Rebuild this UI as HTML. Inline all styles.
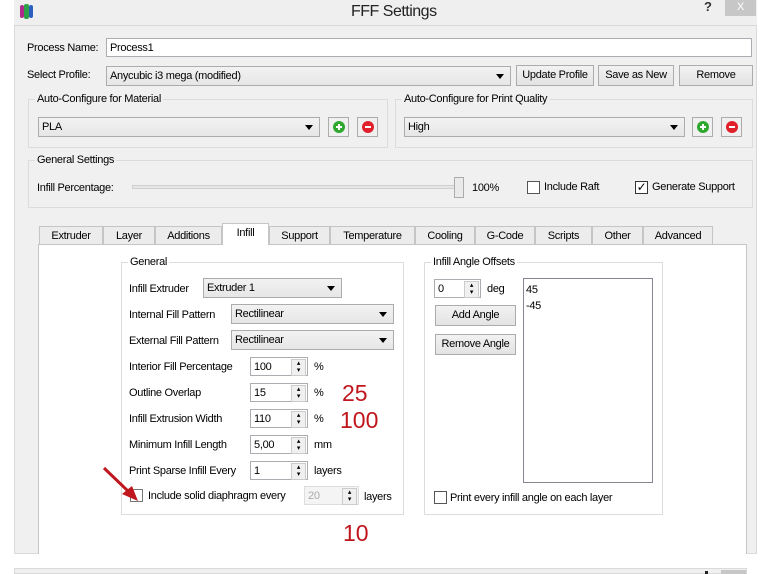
<!DOCTYPE html><html><head><style>
*{box-sizing:border-box;margin:0;padding:0}
body{width:764px;height:574px;background:#fff;position:relative;overflow:hidden;font-family:"Liberation Sans",sans-serif;font-size:11px;color:#000;letter-spacing:-0.3px}
.a{position:absolute;white-space:nowrap}
.in{position:absolute;background:#fff;border:1px solid #abadb3;padding:1px 3px;line-height:16px}
.cb{position:absolute;background:linear-gradient(#f2f2f2,#e6e6e6);border:1px solid #acacac;padding:1px 3px;line-height:17px}
.cb:after{content:"";position:absolute;right:6px;top:7px;border-left:4px solid transparent;border-right:4px solid transparent;border-top:5px solid #000}
.bt{position:absolute;background:linear-gradient(#f2f2f2,#e3e3e3);border:1px solid #acacac;text-align:center;line-height:19px}
.grp{position:absolute;border:1px solid #dcdcdc}
.gl{position:absolute;background:inherit;padding:0 2px;top:-8px;left:6px;line-height:14px}
.ck{position:absolute;width:13px;height:13px;border:1px solid #333;background:#fff}
.sp{position:absolute;background:#fff;border:1px solid #abadb3;padding:1px 3px;line-height:16px;height:19px}
.sp:after{content:"▴\A▾";white-space:pre;position:absolute;right:1px;top:1px;width:13px;height:15px;border:1px solid #ccc;background:#f0f0f0;font-size:7px;line-height:7px;text-align:center;color:#000}
.pl,.mi{position:absolute;width:21px;height:20px;border:1px solid #acacac;background:#f0f0f0}
.pl:after,.mi:after{content:"";position:absolute;left:4px;top:3px;width:12px;height:12px;border-radius:50%}
.pl:after{background:#2fa82f}.mi:after{background:#e0202a}
.pl:before,.mi:before{content:"";position:absolute;left:7px;top:8px;width:6px;height:2px;background:#fff;z-index:2}
.pl i{position:absolute;left:9px;top:6px;width:2px;height:6px;background:#fff;z-index:2}
.tab{position:absolute;top:226px;height:19px;border:1px solid #c5c5c5;border-bottom:none;background:#ececec;text-align:center;line-height:19px}
.red{position:absolute;color:#c0161d;font-size:23px;letter-spacing:0}
</style></head><body>
<div class="a" style="left:14px;top:0;width:743px;height:554px;background:#f0f0f0;border:1px solid #dadada"></div>
<div class="a" style="left:14px;top:0;width:743px;height:26px;background:#efefef;border-bottom:1px solid #d8d8d8"></div>
<div class="a" style="left:20px;top:5px;width:4px;height:13px;background:#b02a8c;border-radius:2px"></div>
<div class="a" style="left:24px;top:4px;width:5px;height:15px;background:#2fa04a;border-radius:2px"></div>
<div class="a" style="left:29px;top:5px;width:4px;height:13px;background:#2a5fc0;border-radius:2px"></div>
<div class="a" style="left:351px;top:3px;font-size:16px;color:#222;letter-spacing:-0.5px">FFF Settings</div>
<div class="a" style="left:704px;top:-1px;font-size:13px;font-weight:bold;color:#333">?</div>
<div class="a" style="left:725px;top:0;width:31px;height:16px;background:#c7c7c7;color:#fff;text-align:center;line-height:15px;font-size:11px">X</div>

<div class="a" style="left:27px;top:42px">Process Name:</div>
<div class="in" style="left:106px;top:38px;width:646px;height:19px">Process1</div>
<div class="a" style="left:27px;top:69px">Select Profile:</div>
<div class="cb" style="left:106px;top:66px;width:405px;height:20px">Anycubic i3 mega (modified)</div>
<div class="bt" style="left:516px;top:65px;width:78px;height:21px">Update Profile</div>
<div class="bt" style="left:598px;top:65px;width:76px;height:21px">Save as New</div>
<div class="bt" style="left:679px;top:65px;width:74px;height:21px">Remove</div>

<div class="grp" style="left:28px;top:99px;width:360px;height:49px;background:#f0f0f0"><span class="gl">Auto-Configure for Material</span></div>
<div class="cb" style="left:38px;top:117px;width:282px;height:20px">PLA</div>
<div class="pl" style="left:328px;top:117px"><i></i></div>
<div class="mi" style="left:357px;top:117px"></div>
<div class="grp" style="left:395px;top:99px;width:358px;height:49px;background:#f0f0f0"><span class="gl">Auto-Configure for Print Quality</span></div>
<div class="cb" style="left:404px;top:117px;width:281px;height:20px">High</div>
<div class="pl" style="left:692px;top:117px"><i></i></div>
<div class="mi" style="left:721px;top:117px"></div>

<div class="grp" style="left:28px;top:160px;width:725px;height:48px;background:#f0f0f0"><span class="gl">General Settings</span></div>
<div class="a" style="left:37px;top:182px">Infill Percentage:</div>
<div class="a" style="left:132px;top:185px;width:330px;height:4px;background:#e6e6e6;border:1px solid #d0d0d0"></div>
<div class="a" style="left:454px;top:177px;width:10px;height:21px;background:#eaeaea;border:1px solid #acacac"></div>
<div class="a" style="left:472px;top:182px">100%</div>
<div class="ck" style="left:527px;top:181px;border-color:#555"></div>
<div class="a" style="left:544px;top:181px">Include Raft</div>
<div class="ck" style="left:635px;top:181px;font-size:12px;line-height:11px;text-align:center">✓</div>
<div class="a" style="left:652px;top:181px">Generate Support</div>

<div class="tab" style="left:39px;width:64px">Extruder</div>
<div class="tab" style="left:103px;width:52px">Layer</div>
<div class="tab" style="left:155px;width:67px">Additions</div>
<div class="tab" style="left:222px;width:47px;top:223px;height:22px;background:#fff;z-index:2">Infill</div>
<div class="tab" style="left:269px;width:61px">Support</div>
<div class="tab" style="left:330px;width:85px">Temperature</div>
<div class="tab" style="left:415px;width:60px">Cooling</div>
<div class="tab" style="left:475px;width:60px">G-Code</div>
<div class="tab" style="left:535px;width:57px">Scripts</div>
<div class="tab" style="left:592px;width:51px">Other</div>
<div class="tab" style="left:643px;width:70px">Advanced</div>
<div class="a" style="left:38px;top:244px;width:709px;height:310px;background:#fff;border:1px solid #c5c5c5;border-bottom:none"></div>

<div class="grp" style="left:121px;top:262px;width:283px;height:253px;background:#fff"><span class="gl">General</span></div>
<div class="a" style="left:129px;top:283px">Infill Extruder</div>
<div class="cb" style="left:203px;top:278px;width:139px;height:20px">Extruder 1</div>
<div class="a" style="left:129px;top:309px">Internal Fill Pattern</div>
<div class="cb" style="left:231px;top:304px;width:163px;height:20px">Rectilinear</div>
<div class="a" style="left:129px;top:335px">External Fill Pattern</div>
<div class="cb" style="left:231px;top:330px;width:163px;height:20px">Rectilinear</div>
<div class="a" style="left:129px;top:361px">Interior Fill Percentage</div>
<div class="sp" style="left:250px;top:357px;width:58px">100</div><div class="a" style="left:314px;top:361px">%</div>
<div class="a" style="left:129px;top:387px">Outline Overlap</div>
<div class="sp" style="left:250px;top:383px;width:58px">15</div><div class="a" style="left:314px;top:387px">%</div>
<div class="a" style="left:129px;top:413px">Infill Extrusion Width</div>
<div class="sp" style="left:250px;top:409px;width:58px">110</div><div class="a" style="left:314px;top:413px">%</div>
<div class="a" style="left:129px;top:439px">Minimum Infill Length</div>
<div class="sp" style="left:250px;top:435px;width:58px">5,00</div><div class="a" style="left:314px;top:439px">mm</div>
<div class="a" style="left:129px;top:465px">Print Sparse Infill Every</div>
<div class="sp" style="left:250px;top:461px;width:58px">1</div><div class="a" style="left:314px;top:465px">layers</div>
<div class="ck" style="left:130px;top:489px;border-color:#777"></div>
<div class="a" style="left:148px;top:490px">Include solid diaphragm every</div>
<div class="sp" style="left:304px;top:486px;width:55px;background:#f4f4f4;color:#aaa;border-color:#ddd">20</div>
<div class="a" style="left:364px;top:491px">layers</div>
<div class="red" style="left:342px;top:380px">25</div>
<div class="red" style="left:340px;top:407px">100</div>
<div class="red" style="left:343px;top:520px">10</div>
<svg class="a" style="left:100px;top:464px" width="48" height="40"><line x1="4" y1="4" x2="30" y2="29" stroke="#c0161d" stroke-width="3"/><polygon points="38,37 22,30 32,22" fill="#c0161d"/></svg>

<div class="grp" style="left:424px;top:262px;width:239px;height:253px;background:#fff"><span class="gl">Infill Angle Offsets</span></div>
<div class="sp" style="left:434px;top:279px;width:47px">0</div><div class="a" style="left:487px;top:283px">deg</div>
<div class="bt" style="left:435px;top:305px;width:81px;height:21px">Add Angle</div>
<div class="bt" style="left:435px;top:334px;width:81px;height:21px">Remove Angle</div>
<div class="a" style="left:523px;top:278px;width:130px;height:205px;border:1px solid #828790;background:#fff;padding:3px 2px;line-height:16px">45<br>-45</div>
<div class="ck" style="left:434px;top:491px;border-color:#555"></div>
<div class="a" style="left:450px;top:492px">Print every infill angle on each layer</div>

<div class="a" style="left:14px;top:568px;width:733px;height:6px;background:#f0f0f0;border:1px solid #dadada"></div>
<div class="a" style="left:721px;top:570px;width:25px;height:4px;background:#c7c7c7"></div>
<div class="a" style="left:705px;top:571px;width:3px;height:3px;background:#222"></div>
</body></html>
